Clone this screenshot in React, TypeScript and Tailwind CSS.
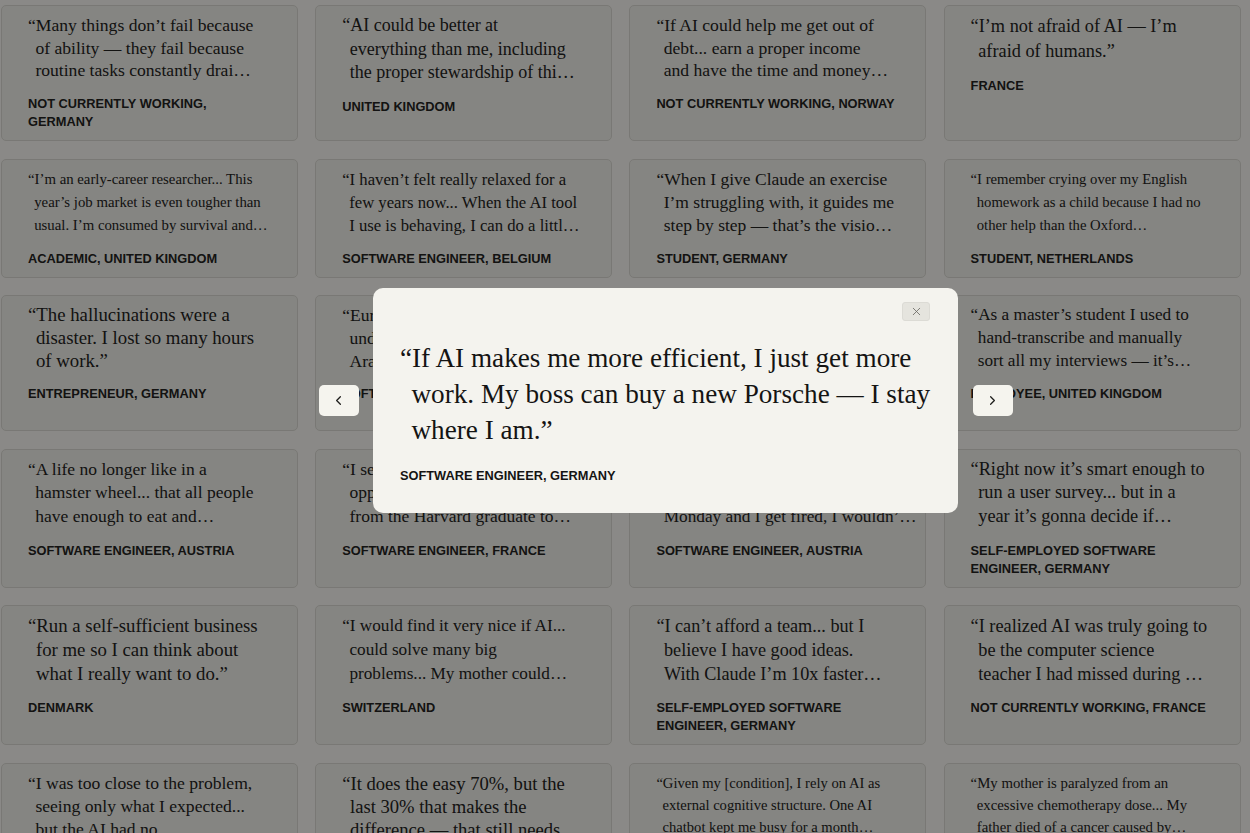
import { ChevronLeft, ChevronRight, X } from "lucide-react";

type Card = { q: string[]; who: string[]; fs: string; lh?: string };
type Row = { lh: string; cards: Card[] };

const serif = "font-['Liberation_Serif',serif]";
const sans = "font-['Liberation_Sans',Arial,sans-serif]";

const rows: Row[] = [
  {
    lh: "leading-[22.7px]",
    cards: [
      { q: ["“Many things don’t fail because", "of ability — they fail because", "routine tasks constantly drai…"], who: ["NOT CURRENTLY WORKING,", "GERMANY"], fs: "text-[17.6px]" },
      { q: ["“AI could be better at", "everything than me, including", "the proper stewardship of thi…"], who: ["UNITED KINGDOM"], fs: "text-[18px]", lh: "leading-[23.5px]" },
      { q: ["“If AI could help me get out of", "debt... earn a proper income", "and have the time and money…"], who: ["NOT CURRENTLY WORKING, NORWAY"], fs: "text-[17.6px]" },
      { q: ["“I’m not afraid of AI — I’m", "afraid of humans.”"], who: ["FRANCE"], fs: "text-[18.3px]", lh: "leading-[25px]" },
    ],
  },
  {
    lh: "leading-[23px]",
    cards: [
      { q: ["“I’m an early-career researcher... This", "year’s job market is even tougher than", "usual. I’m consumed by survival and…"], who: ["ACADEMIC, UNITED KINGDOM"], fs: "text-[14.8px]" },
      { q: ["“I haven’t felt really relaxed for a", "few years now... When the AI tool", "I use is behaving, I can do a littl…"], who: ["SOFTWARE ENGINEER, BELGIUM"], fs: "text-[16.7px]" },
      { q: ["“When I give Claude an exercise", "I’m struggling with, it guides me", "step by step — that’s the visio…"], who: ["STUDENT, GERMANY"], fs: "text-[17.5px]" },
      { q: ["“I remember crying over my English", "homework as a child because I had no", "other help than the Oxford…"], who: ["STUDENT, NETHERLANDS"], fs: "text-[14.7px]" },
    ],
  },
  {
    lh: "leading-[22.7px]",
    cards: [
      { q: ["“The hallucinations were a", "disaster. I lost so many hours", "of work.”"], who: ["ENTREPRENEUR, GERMANY"], fs: "text-[18.8px]" },
      { q: ["“European companies still don’t", "understand what AI could do for", "Arabic speakers like me…"], who: ["SOFTWARE ENGINEER, SWEDEN"], fs: "text-[17.5px]" },
      { q: ["“I spend my evenings learning what", "my job will look like in five years,", "and I still don’t know…"], who: ["SELF-EMPLOYED DESIGNER,", "SPAIN"], fs: "text-[17px]" },
      { q: ["“As a master’s student I used to", "hand-transcribe and manually", "sort all my interviews — it’s…"], who: ["EMPLOYEE, UNITED KINGDOM"], fs: "text-[17.2px]" },
    ],
  },
  {
    lh: "leading-[23.7px]",
    cards: [
      { q: ["“A life no longer like in a", "hamster wheel... that all people", "have enough to eat and…"], who: ["SOFTWARE ENGINEER, AUSTRIA"], fs: "text-[17.5px]" },
      { q: ["“I see a future where AI gives", "opportunities to the kid in a village", "from the Harvard graduate to…"], who: ["SOFTWARE ENGINEER, FRANCE"], fs: "text-[17.5px]" },
      { q: ["“If AI took over my job on a", "Friday, I’d be fine — but if it’s", "Monday and I get fired, I wouldn’…"], who: ["SOFTWARE ENGINEER, AUSTRIA"], fs: "text-[17.3px]" },
      { q: ["“Right now it’s smart enough to", "run a user survey... but in a", "year it’s gonna decide if…"], who: ["SELF-EMPLOYED SOFTWARE", "ENGINEER, GERMANY"], fs: "text-[18.3px]" },
    ],
  },
  {
    lh: "leading-[24px]",
    cards: [
      { q: ["“Run a self-sufficient business", "for me so I can think about", "what I really want to do.”"], who: ["DENMARK"], fs: "text-[18.8px]" },
      { q: ["“I would find it very nice if AI...", "could solve many big", "problems... My mother could…"], who: ["SWITZERLAND"], fs: "text-[17.2px]" },
      { q: ["“I can’t afford a team... but I", "believe I have good ideas.", "With Claude I’m 10x faster…"], who: ["SELF-EMPLOYED SOFTWARE", "ENGINEER, GERMANY"], fs: "text-[18.2px]" },
      { q: ["“I realized AI was truly going to", "be the computer science", "teacher I had missed during …"], who: ["NOT CURRENTLY WORKING, FRANCE"], fs: "text-[18.3px]" },
    ],
  },
  {
    lh: "leading-[23px]",
    cards: [
      { q: ["“I was too close to the problem,", "seeing only what I expected...", "but the AI had no…"], who: ["SOFTWARE ENGINEER, GERMANY"], fs: "text-[17.6px]" },
      { q: ["“It does the easy 70%, but the", "last 30% that makes the", "difference — that still needs…"], who: ["SOFTWARE ENGINEER, ITALY"], fs: "text-[18.6px]" },
      { q: ["“Given my [condition], I rely on AI as", "external cognitive structure. One AI", "chatbot kept me busy for a month…"], who: ["STUDENT, GERMANY"], fs: "text-[14.6px]", lh: "leading-[22px]" },
      { q: ["“My mother is paralyzed from an", "excessive chemotherapy dose... My", "father died of a cancer caused by…"], who: ["EMPLOYEE, GERMANY"], fs: "text-[14.8px]", lh: "leading-[22px]" },
    ],
  },
];

function Lines({ lines }: { lines: string[] }) {
  return (
    <>
      {lines.map((l, i) => (
        <span key={i}>
          {i > 0 && <br />}
          {l}
        </span>
      ))}
    </>
  );
}

function QuoteCard({ card, lh }: { card: Card; lh: string }) {
  return (
    <div className="flex flex-col rounded-[5px] border border-[#d8d7d1] bg-[#eeede8] pl-[26px] pr-4 pt-[8px] pb-[9px]">
      <p className={`${serif} ${card.fs} ${card.lh ?? lh} whitespace-nowrap pl-[0.42em] -indent-[0.42em] text-[#232321]`}>
        <Lines lines={card.q} />
      </p>
      <p className={`${sans} mt-[13px] whitespace-nowrap text-[12.8px] font-bold leading-[18px] text-[#232321]`}>
        <Lines lines={card.who} />
      </p>
    </div>
  );
}

export default function App() {
  return (
    <div className="min-h-screen overflow-hidden bg-[#f6f5f0]">
      <div className="grid grid-cols-[repeat(4,297px)] gap-x-[17.2px] gap-y-[17.5px] pl-px pt-[5px]">
        {rows.map((row, ri) =>
          row.cards.map((card, ci) => <QuoteCard key={`${ri}-${ci}`} card={card} lh={row.lh} />)
        )}
      </div>

      {/* dimmed backdrop + lightbox */}
      <div className="fixed inset-0 flex items-center justify-center bg-black/[0.44] pl-[81px] pb-[33px]">
        <div className="flex items-center">
          <button className="flex h-[31px] w-[40px] items-center justify-center rounded-[5px] bg-[#f5f4ee] text-[#1f1f1d]">
            <ChevronLeft size={15} strokeWidth={2} />
          </button>

          <div className="relative mx-[14.5px] w-[585px] rounded-[10px] bg-[#f4f3ee] pl-[27px] pr-6 pt-[52px] pb-[28px]">
            <button className="absolute right-[28px] top-[14px] flex h-[19px] w-[28px] items-center justify-center rounded-[3px] border border-[#dcdbd5] bg-[#e5e4de] text-[#66655f]">
              <X size={13} strokeWidth={1.5} />
            </button>
            <p className={`${serif} whitespace-nowrap pl-[0.42em] -indent-[0.42em] text-[27.2px] leading-[36px] text-[#141413]`}>
              <Lines
                lines={[
                  "“If AI makes me more efficient, I just get more",
                  "work. My boss can buy a new Porsche — I stay",
                  "where I am.”",
                ]}
              />
            </p>
            <p className={`${sans} mt-[19px] text-[12.8px] font-bold leading-[18px] text-[#141413]`}>
              SOFTWARE ENGINEER, GERMANY
            </p>
          </div>

          <button className="flex h-[31px] w-[40px] items-center justify-center rounded-[5px] bg-[#f5f4ee] text-[#1f1f1d]">
            <ChevronRight size={15} strokeWidth={2} />
          </button>
        </div>
      </div>
    </div>
  );
}
